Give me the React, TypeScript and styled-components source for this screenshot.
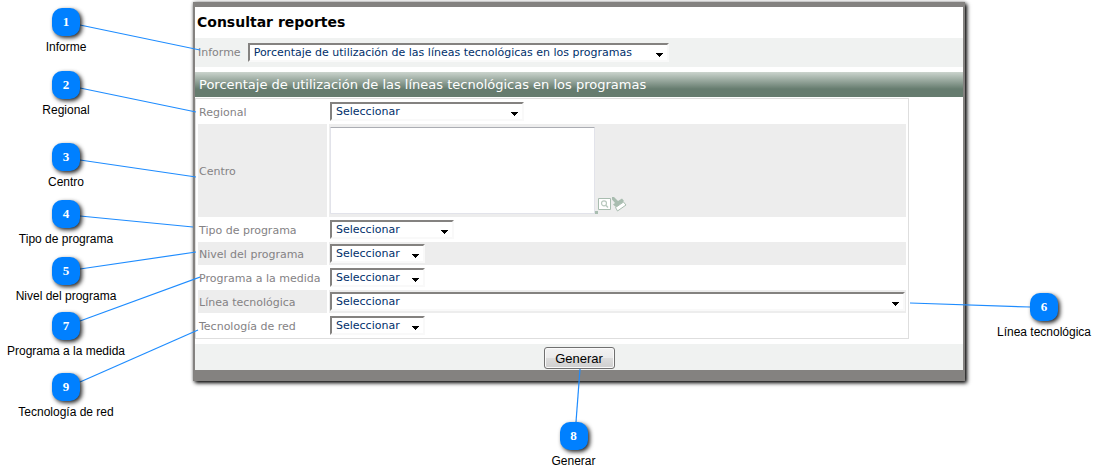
import React from "react";
import styled, { createGlobalStyle } from "styled-components";

const GlobalStyle = createGlobalStyle`
  *, *::before, *::after { box-sizing: border-box; }
  body { margin: 0; background: #fff; }
`;

const uiFont = `"DejaVu Sans", Verdana, sans-serif`;
const plainFont = `"Liberation Sans", Arial, sans-serif`;

const Page = styled.main`
  position: relative;
  padding: 2px 132px 90px 193px;
  font-family: ${uiFont};
  font-size: 11px;
`;

const Panel = styled.form`
  border: solid #848280;
  border-width: 5px 2px 11px;
  background: #fff;
  box-shadow: 2px 2px 4px #000, 0 0 3px rgba(0, 0, 0, 0.3);
`;

const PanelTitle = styled.h1`
  margin: 0;
  padding-left: 2px;
  font-size: 14px;
  line-height: 31px;
  color: #000;
`;

const ReportRow = styled.div`
  display: flex;
  align-items: center;
  gap: 7px;
  height: 29px;
  padding-left: 3px;
  background: #f0f2f1;
`;

const FieldLabel = styled.label`
  color: #848284;
  white-space: nowrap;
`;

const SectionTitle = styled.h2`
  margin: 5px 0 1px;
  padding-left: 4px;
  font-size: 13px;
  font-weight: 400;
  line-height: 25px;
  color: #fff;
  background: linear-gradient(#cbd4cd 0, #667c6f 17px, #667c6f 100%);
`;

const FieldTable = styled.table`
  width: 93%;
  border: 1px solid #dedede;
  border-collapse: separate;
  border-spacing: 2px 1px;
`;

const FieldRow = styled.tr<{ $shaded?: boolean }>`
  height: 23px;
  background: ${(p) => (p.$shaded ? "#ededed" : "#fff")};
`;

const LabelCell = styled.th`
  width: 129px;
  padding: 2px 1px 0;
  font-weight: 400;
  text-align: left;
`;

const ValueCell = styled.td`
  padding: 0 1px;
`;

const SelectBox = styled.span<{ $width: string }>`
  position: relative;
  display: block;
  width: ${(p) => p.$width};
`;

const Select = styled.select`
  appearance: none;
  display: block;
  width: 100%;
  height: 19px;
  margin: 0;
  padding: 1px 18px 0 4px;
  border: 2px solid;
  border-color: #848280 #f9f9f9 #f9f9f9 #848280;
  border-radius: 0;
  background: #fff;
  color: #00306b;
  font-family: ${uiFont};
  font-size: 11px;
  line-height: 14px;
`;

const Arrow = styled.svg`
  position: absolute;
  right: 6px;
  bottom: 5px;
  pointer-events: none;
`;

const CenterPicker = styled.div`
  display: flex;
  align-items: flex-end;
  height: 93px;
  padding: 3px 0;
`;

const CenterList = styled.textarea`
  width: 265px;
  height: 87px;
  margin: 0;
  resize: none;
  border: 1px solid #e2e3ea;
  border-top-color: #abadb3;
  border-radius: 1px;
  background: #fff;
  color: #00306b;
  font-family: ${uiFont};
  font-size: 11px;
`;

const Marker = styled.span`
  width: 3px;
  height: 3px;
  background: #a9bdb0;
`;

const IconButton = styled.button`
  display: block;
  margin: 0;
  padding: 0;
  border: 0;
  background: none;
  svg { display: block; }
`;

const Actions = styled.div`
  display: flex;
  justify-content: center;
  margin-top: 5px;
  padding: 3px 0 1px;
  background: #f0f2f1;
`;

const SubmitButton = styled.button`
  width: 71px;
  height: 22px;
  padding: 0;
  border: 1px solid #707070;
  border-radius: 3px;
  box-shadow: inset 0 0 0 1px #fafafa;
  background: linear-gradient(#f2f2f2 0, #ebebeb 50%, #dddddd 50%, #cfcfcf 100%);
  color: #000;
  font-family: ${plainFont};
  font-size: 13px;
`;

type Side = "left" | "center" | "right";

const sideWidth = { left: "200px", center: "132px", right: "192px" };
const sideOffset = {
  left: "left: 0;",
  center: "left: calc(50% + 25px); transform: translateX(-50%);",
  right: "right: 0;",
};

const Layer = styled.div<{ $side: Side }>`
  position: absolute;
  top: 0;
  ${(p) => sideOffset[p.$side]}
  width: ${(p) => sideWidth[p.$side]};
  height: 471px;
  pointer-events: none;
`;

const Connectors = styled.svg`
  position: absolute;
  inset: 0;
  width: 100%;
  height: 100%;
  stroke: #1e8cff;
  stroke-width: 1.2;
`;

const CalloutNode = styled.div<{ $x: number; $y: number }>`
  position: absolute;
  left: ${(p) => p.$x - 66}px;
  top: ${(p) => p.$y}px;
  width: 132px;
  display: flex;
  flex-direction: column;
  align-items: center;
  gap: 4px;
  color: #000;
  font-family: ${plainFont};
  font-size: 12px;
  line-height: 14px;
  white-space: nowrap;
`;

const Badge = styled.span`
  width: 28px;
  height: 28px;
  border-radius: 10px;
  background: #0080ff;
  box-shadow: 2px 2px 4px rgba(0, 0, 0, 0.85);
  color: #fff;
  font-family: "Liberation Serif", "Times New Roman", serif;
  font-size: 13px;
  font-weight: 700;
  line-height: 28px;
  text-align: center;
`;

interface CalloutData { number: number; text: string; x: number; y: number; line: [number, number, number, number]; }

const callouts: Record<Side, CalloutData[]> = {
  left: [
    { number: 1, text: "Informe", x: 66, y: 8, line: [80, 25, 200, 50] },
    { number: 2, text: "Regional", x: 66, y: 71, line: [80, 88, 196, 112] },
    { number: 3, text: "Centro", x: 66, y: 143, line: [80, 160, 196, 177] },
    { number: 4, text: "Tipo de programa", x: 66, y: 200, line: [80, 216, 193, 227] },
    { number: 5, text: "Nivel del programa", x: 66, y: 257, line: [80, 269, 196, 252] },
    { number: 7, text: "Programa a la medida", x: 66, y: 312, line: [80, 321, 200, 277] },
    { number: 9, text: "Tecnología de red", x: 66, y: 373, line: [80, 382, 198, 330] },
  ],
  center: [{ number: 8, text: "Generar", x: 66, y: 422, line: [68, 422, 72, 369] }],
  right: [{ number: 6, text: "Línea tecnológica", x: 139, y: 293, line: [5, 303, 125, 307] }],
};

function CalloutLayer({ side }: { side: Side }) {
  return (
    <Layer $side={side}>
      <Connectors aria-hidden="true">
        {callouts[side].map(({ number, line: [x1, y1, x2, y2] }) => (
          <line key={number} x1={x1} y1={y1} x2={x2} y2={y2} />
        ))}
      </Connectors>
      {callouts[side].map((c) => (
        <CalloutNode key={c.number} $x={c.x} $y={c.y}>
          <Badge>{c.number}</Badge>
          <span>{c.text}</span>
        </CalloutNode>
      ))}
    </Layer>
  );
}

function DropDown({ id, option, width }: { id: string; option: string; width: string }) {
  return (
    <SelectBox $width={width}>
      <Select id={id}>
        <option>{option}</option>
      </Select>
      <Arrow width="7" height="4" viewBox="0 0 7 4" shapeRendering="crispEdges" aria-hidden="true">
        <path d="M0 0h7v1H0zM1 1h5v1H1zM2 2h3v1H2zM3 3h1v1H3z" />
      </Arrow>
    </SelectBox>
  );
}

function SelectField({ id, label, width, shaded }: { id: string; label: string; width: string; shaded?: boolean }) {
  return (
    <FieldRow $shaded={shaded}>
      <LabelCell scope="row"><FieldLabel htmlFor={id}>{label}</FieldLabel></LabelCell>
      <ValueCell><DropDown id={id} option="Seleccionar" width={width} /></ValueCell>
    </FieldRow>
  );
}

const reportName = "Porcentaje de utilización de las líneas tecnológicas en los programas";

export default function App() {
  return (
    <Page>
      <GlobalStyle />
      <Panel onSubmit={(e: React.FormEvent) => e.preventDefault()}>
        <PanelTitle>Consultar reportes</PanelTitle>
        <ReportRow>
          <FieldLabel htmlFor="informe">Informe</FieldLabel>
          <DropDown id="informe" option={reportName} width="421px" />
        </ReportRow>
        <SectionTitle>{reportName}</SectionTitle>
        <FieldTable>
          <tbody>
            <SelectField id="regional" label="Regional" width="194px" />
            <FieldRow $shaded>
              <LabelCell scope="row"><FieldLabel htmlFor="centro">Centro</FieldLabel></LabelCell>
              <ValueCell>
                <CenterPicker>
                  <CenterList id="centro" />
                  <Marker />
                  <IconButton type="button" aria-label="Buscar centro">
                    <svg width="14" height="16" viewBox="0 0 14 16">
                      <path d="M.5 .5h12v11H.5z" fill="#fff" stroke="#a9bdb0" />
                      <circle cx="6" cy="5.3" r="2.5" fill="none" stroke="#b9c9bf" strokeWidth="1.2" />
                      <path d="M7.8 7.2l2.2 2.3" stroke="#b9c9bf" strokeWidth="1.5" />
                    </svg>
                  </IconButton>
                  <IconButton type="button" aria-label="Limpiar centro">
                    <svg width="15" height="17" viewBox="0 0 15 17">
                      <path d="M0 0h2l4 4 4-2.500 2 2.500-7.500 6.500-3.500-3 2-1.500L0 2.500z" fill="#a9bdb0" />
                      <path d="M3.500 10.500l8-5.500 2.500 3-8.500 6z" fill="#fff" stroke="#a9bdb0" />
                    </svg>
                  </IconButton>
                </CenterPicker>
              </ValueCell>
            </FieldRow>
            <SelectField id="tipo" label="Tipo de programa" width="124px" />
            <SelectField id="nivel" label="Nivel del programa" width="95px" shaded />
            <SelectField id="medida" label="Programa a la medida" width="95px" />
            <SelectField id="linea" label="Línea tecnológica" width="100%" shaded />
            <SelectField id="red" label="Tecnología de red" width="95px" />
          </tbody>
        </FieldTable>
        <Actions><SubmitButton type="submit">Generar</SubmitButton></Actions>
      </Panel>
      <CalloutLayer side="left" />
      <CalloutLayer side="center" />
      <CalloutLayer side="right" />
    </Page>
  );
}
